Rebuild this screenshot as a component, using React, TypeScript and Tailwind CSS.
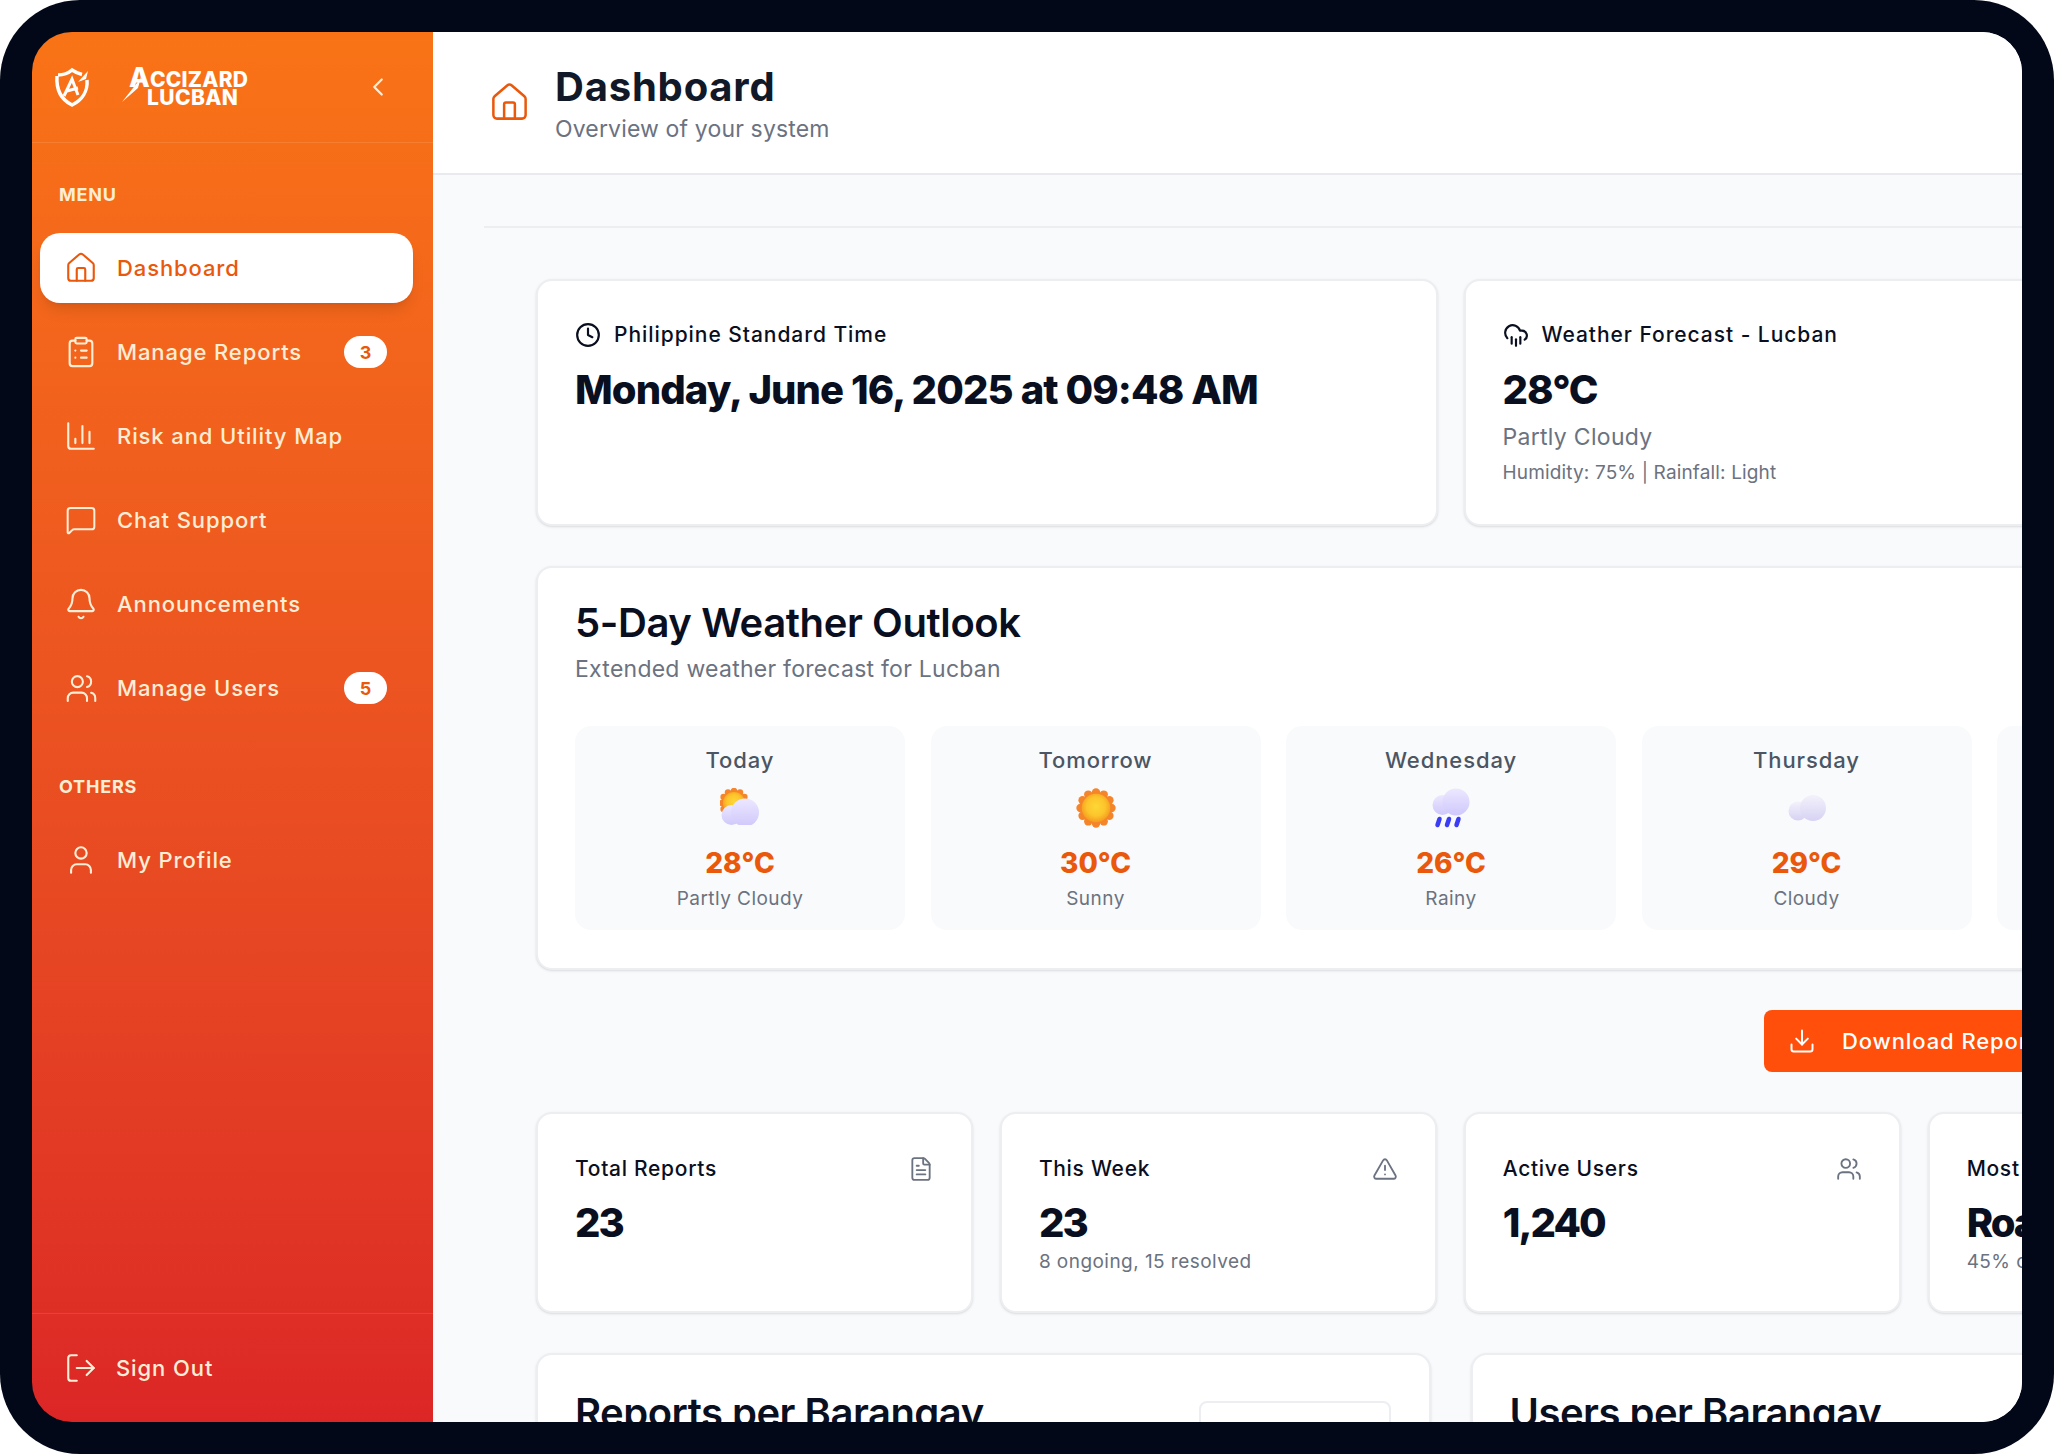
import {
  Bell,
  ChartColumn,
  ChevronLeft,
  ClipboardList,
  Clock,
  CloudRain,
  Download,
  FileText,
  House,
  LogOut,
  MessageSquare,
  TriangleAlert,
  User,
  Users,
} from "lucide-react";

const navItems = [
  { label: "Dashboard", icon: House, size: 34, active: true },
  { label: "Manage Reports", icon: ClipboardList, size: 34, badge: "3" },
  { label: "Risk and Utility Map", icon: ChartColumn, size: 34 },
  { label: "Chat Support", icon: MessageSquare, size: 32 },
  { label: "Announcements", icon: Bell, size: 34 },
  { label: "Manage Users", icon: Users, size: 33, badge: "5" },
];

const scallops = [0, 30, 60, 90, 120, 150, 180, 210, 240, 270, 300, 330];

function Defs() {
  return (
    <svg className="absolute h-0 w-0">
      <defs>
        <radialGradient id="sunFill" cx="0.5" cy="0.45" r="0.55">
          <stop offset="0" stopColor="#fdd835" />
          <stop offset="0.6" stopColor="#fcc42c" />
          <stop offset="1" stopColor="#f59a1f" />
        </radialGradient>
        <linearGradient id="cloudFill" x1="0" y1="0" x2="0" y2="1">
          <stop offset="0" stopColor="#ece8ff" />
          <stop offset="1" stopColor="#cfc8fb" />
        </linearGradient>
        <linearGradient id="cloudGrey" x1="0" y1="0" x2="0" y2="1">
          <stop offset="0" stopColor="#f3f2fb" />
          <stop offset="1" stopColor="#d6d2f3" />
        </linearGradient>
      </defs>
    </svg>
  );
}

function Sun({ cx, cy, r }: { cx: number; cy: number; r: number }) {
  return (
    <g>
      {scallops.map((a) => (
        <circle
          key={a}
          cx={cx + Math.cos((a * Math.PI) / 180) * r}
          cy={cy + Math.sin((a * Math.PI) / 180) * r}
          r={r * 0.27}
          fill="#f5852a"
        />
      ))}
      <circle cx={cx} cy={cy} r={r} fill="#f5852a" />
      <circle cx={cx} cy={cy} r={r * 0.92} fill="url(#sunFill)" />
    </g>
  );
}

function PartlyCloudyIcon() {
  return (
    <svg viewBox="0 0 40 40" className="h-[40px] w-[40px]">
      <Sun cx={14} cy={15} r={12} />
      <g fill="url(#cloudFill)">
        <circle cx="11.500" cy="27" r="10" />
        <circle cx="25" cy="24.500" r="14" />
      </g>
      <rect x="0" y="37" width="40" height="3" fill="#f9fafb" />
    </svg>
  );
}

function SunnyIcon() {
  return (
    <svg viewBox="0 0 40 40" className="h-[40px] w-[40px]">
      <Sun cx={20} cy={20} r={15.500} />
    </svg>
  );
}

function RainyIcon() {
  return (
    <svg viewBox="0 0 40 40" className="h-[40px] w-[40px]">
      <g fill="url(#cloudFill)">
        <circle cx="11.500" cy="17" r="10" />
        <circle cx="25" cy="14" r="13.500" />
      </g>
      <g stroke="#3b3df5" strokeWidth="4.500" strokeLinecap="round">
        <line x1="8.500" y1="31" x2="6.500" y2="37" />
        <line x1="18" y1="31" x2="16" y2="37" />
        <line x1="27.500" y1="31" x2="25.500" y2="37" />
      </g>
    </svg>
  );
}

function CloudyIcon() {
  return (
    <svg viewBox="0 0 40 40" className="h-[40px] w-[40px]">
      <g fill="url(#cloudGrey)">
        <circle cx="11" cy="23" r="9.500" />
        <circle cx="26" cy="20" r="13" />
      </g>
    </svg>
  );
}

const forecast = [
  { day: "Today", icon: PartlyCloudyIcon, temp: "28°C", desc: "Partly Cloudy" },
  { day: "Tomorrow", icon: SunnyIcon, temp: "30°C", desc: "Sunny" },
  { day: "Wednesday", icon: RainyIcon, temp: "26°C", desc: "Rainy" },
  { day: "Thursday", icon: CloudyIcon, temp: "29°C", desc: "Cloudy" },
  { day: "Friday", icon: SunnyIcon, temp: "31°C", desc: "Sunny" },
];

const stats = [
  { title: "Total Reports", value: "23", icon: FileText },
  { title: "This Week", value: "23", sub: "8 ongoing, 15 resolved", icon: TriangleAlert },
  { title: "Active Users", value: "1,240", icon: Users },
  { title: "Most Common Type", value: "Road Accident", sub: "45% of total", icon: TriangleAlert },
];

function Logo() {
  return (
    <div className="flex items-center">
      <svg viewBox="0 0 40 40" className="h-[40px] w-[40px] text-white" fill="none" stroke="currentColor">
        <path d="M6 8c5 0 10-1.500 14-5 3 2 6 3.500 10 4.500M35 13c1 11-5 20-15 25C10 33 4 24 5 9" strokeWidth="3.500" />
        <path d="M12 29L20 12l6 16M15 24l11-3" strokeWidth="3" />
        <path d="M26 15l10-11-2 8z" fill="currentColor" stroke="none" />
      </svg>
      <div className="relative ml-[32px] w-[130px] font-extrabold leading-[18px] text-white">
        <svg viewBox="0 0 30 30" className="absolute -left-[2px] top-[5px] h-[30px] w-[30px]">
          <path d="M0 29L15 10l4-6-3 11z" fill="#fff" />
        </svg>
        <div className="pl-[5px] pt-[1px] text-[21px] tracking-[0.2px]">
          <span className="text-[27px]">A</span>CCIZARD
        </div>
        <div className="pl-[23px] text-[21px] tracking-[0.4px]">LUCBAN</div>
      </div>
    </div>
  );
}

function SideLink({ label, icon: Icon, size = 34, active, badge }: { label: string; icon: typeof House; size?: number; active?: boolean; badge?: string }) {
  return (
    <a
      className={
        active
          ? "mb-[14px] flex h-[70px] items-center rounded-[20px] bg-white pl-[23px] pr-[26px] text-[#ea580c] shadow-lg"
          : "mb-[14px] flex h-[70px] items-center rounded-[20px] pl-[23px] pr-[26px] text-[#ffedd5]"
      }
    >
      <span className="flex w-[36px] shrink-0 justify-center">
        <Icon size={size} strokeWidth={1.5} />
      </span>
      <span className="ml-[18px] text-[22px] font-medium tracking-[0.9px]">{label}</span>
      {badge && (
        <span className="ml-auto flex h-[32px] w-[43px] items-center justify-center rounded-full bg-white text-[18px] font-bold text-[#ea580c]">
          {badge}
        </span>
      )}
    </a>
  );
}

function Sidebar() {
  return (
    <aside className="flex h-full w-[401px] shrink-0 flex-col bg-linear-to-b from-[#f97316] to-[#dc2626]">
      <div className="flex h-[111px] shrink-0 items-center border-b border-white/10 pl-[20px] pr-[40px]">
        <Logo />
        <ChevronLeft size={30} strokeWidth={1.8} className="ml-auto text-[#ffedd5]" />
      </div>
      <nav className="flex-1 pl-[8px] pr-[20px] pt-[40px]">
        <div className="mb-[26px] pl-[19px] text-[18px] font-bold leading-[24px] tracking-[0.8px] text-[#ffedd5]">MENU</div>
        {navItems.map((item) => (
          <SideLink key={item.label} {...item} />
        ))}
        <div className="mb-[26px] mt-[52px] pl-[19px] text-[18px] font-bold leading-[24px] tracking-[0.8px] text-[#ffedd5]">OTHERS</div>
        <SideLink label="My Profile" icon={User} />
      </nav>
      <div className="flex h-[109px] shrink-0 items-center border-t border-white/10 pl-[32px] text-[#ffedd5]">
        <LogOut size={34} strokeWidth={1.5} />
        <span className="ml-[18px] text-[22px] font-medium tracking-[0.9px]">Sign Out</span>
      </div>
    </aside>
  );
}

function Card({ className, children }: { className?: string; children: React.ReactNode }) {
  return <div className={"rounded-[16px] border-2 border-[#eceef2] bg-white shadow-sm " + (className ?? "")}>{children}</div>;
}

function Dashboard() {
  return (
    <main className="flex h-full min-w-0 flex-1 flex-col overflow-hidden bg-[#f9fafb]">
      <header className="flex h-[143px] shrink-0 items-center border-b-2 border-[#e8eaee] bg-white pl-[55px]">
        <House size={43} strokeWidth={1.4} className="text-[#ea580c]" />
        <div className="ml-[24px]">
          <h1 className="text-[40px] font-bold leading-[50px] tracking-[0.8px] text-[#111827]">Dashboard</h1>
          <p className="mt-[2px] text-[23px] leading-[30px] tracking-[0.15px] text-[#6b7280]">Overview of your system</p>
        </div>
      </header>

      <div className="pl-[51px] pt-[51px]">
        <div className="w-[1900px] border-t-2 border-[#eceef1] pl-[52px] pt-[51px]">
          <div className="flex w-[1829px] flex-col gap-[40px]">
            <div className="grid grid-cols-2 gap-[26px]">
              <Card className="h-[247px] px-[37px] pt-[40px]">
                <div className="flex items-center text-[21px] font-medium leading-[28px] tracking-[0.95px] text-[#0a0f1f]">
                  <Clock size={26} strokeWidth={2} />
                  <span className="ml-[13px]">Philippine Standard Time</span>
                </div>
                <div className="mt-[16px] text-[40px] font-extrabold leading-[50px] tracking-[-0.9px] text-[#0a0f1f]">Monday, June 16, 2025 at 09:48 AM</div>
              </Card>
              <Card className="h-[247px] px-[37px] pt-[40px]">
                <div className="flex items-center text-[21px] font-medium leading-[28px] tracking-[0.95px] text-[#0a0f1f]">
                  <CloudRain size={26} strokeWidth={2} />
                  <span className="ml-[13px]">Weather Forecast - Lucban</span>
                </div>
                <div className="mt-[16px] text-[40px] font-extrabold leading-[50px] tracking-[-1.1px] text-[#0a0f1f]">28°C</div>
                <div className="mt-[7px] text-[23px] leading-[30px] tracking-[0.3px] text-[#6b7280]">Partly Cloudy</div>
                <div className="mt-[9px] text-[19px] leading-[24px] tracking-[0.15px] text-[#6b7280]">Humidity: 75% | Rainfall: Light</div>
              </Card>
            </div>

            <Card className="h-[404px] px-[37px] pt-[30px]">
              <h2 className="text-[40px] font-semibold leading-[50px] tracking-[-0.4px] text-[#0a0f1f]">5-Day Weather Outlook</h2>
              <p className="mt-[6px] text-[23px] leading-[30px] tracking-[0.25px] text-[#6b7280]">Extended weather forecast for Lucban</p>
              <div className="mt-[42px] flex gap-[25.500px]">
                {forecast.map((f) => (
                  <div key={f.day} className="flex h-[204px] w-[330px] shrink-0 flex-col items-center rounded-[16px] bg-[#f9fafb] pt-[20px]">
                    <div className="text-[22px] font-medium leading-[28px] tracking-[0.9px] text-[#4b5563]">{f.day}</div>
                    <div className="mt-[14px] flex h-[40px] items-center">
                      <f.icon />
                    </div>
                    <div className="mt-[19px] text-[28px] font-extrabold leading-[32px] text-[#ea580c]">{f.temp}</div>
                    <div className="mt-[8px] text-[19px] leading-[24px] tracking-[0.45px] text-[#6b7280]">{f.desc}</div>
                  </div>
                ))}
              </div>
            </Card>

            <div className="flex">
              <button className="ml-[1228px] flex h-[62px] items-center rounded-[8px] bg-[#ff4f0b] pl-[24px] pr-[40px] text-[22px] font-medium tracking-[0.9px] text-white">
                <Download size={28} strokeWidth={1.7} />
                <span className="ml-[26px] whitespace-nowrap">Download Report</span>
              </button>
            </div>

            <div className="grid grid-cols-4 gap-[26.500px]">
              {stats.map((s) => (
                <Card key={s.title} className="h-[201px] px-[37px] pt-[41px]">
                  <div className="flex items-center justify-between text-[21px] font-medium leading-[28px] tracking-[0.7px] text-[#0a0f1f]">
                    <span>{s.title}</span>
                    <s.icon size={26} strokeWidth={1.7} className="text-[#6b7280]" />
                  </div>
                  <div className="mt-[15px] text-[40px] font-extrabold leading-[50px] tracking-[-2px] text-[#0a0f1f]">{s.value}</div>
                  {s.sub && <div className="mt-[2px] text-[19px] leading-[24px] tracking-[0.45px] text-[#6b7280]">{s.sub}</div>}
                </Card>
              ))}
            </div>

            <div className="grid grid-cols-2 gap-[40px]">
              <Card className="flex h-[300px] items-start justify-between pl-[37px] pr-[38px] pt-[33px]">
                <h2 className="text-[40px] font-semibold leading-[50px] tracking-[-0.5px] text-[#0a0f1f]">Reports per Barangay</h2>
                <div className="mt-[13px] h-[60px] w-[192px] rounded-[8px] border-2 border-[#eceef2]" />
              </Card>
              <Card className="h-[300px] pl-[37px] pt-[33px]">
                <h2 className="text-[40px] font-semibold leading-[50px] tracking-[-0.5px] text-[#0a0f1f]">Users per Barangay</h2>
              </Card>
            </div>
          </div>
        </div>
      </div>
    </main>
  );
}

export default function App() {
  return (
    <div className="h-[1454px] w-[2054px] bg-white font-['Inter','Liberation_Sans',sans-serif]">
      <Defs />
      <div className="h-full rounded-[80px] bg-[#020817] p-[32px]">
        <div className="flex h-full overflow-hidden rounded-[40px]">
          <Sidebar />
          <Dashboard />
        </div>
      </div>
    </div>
  );
}
